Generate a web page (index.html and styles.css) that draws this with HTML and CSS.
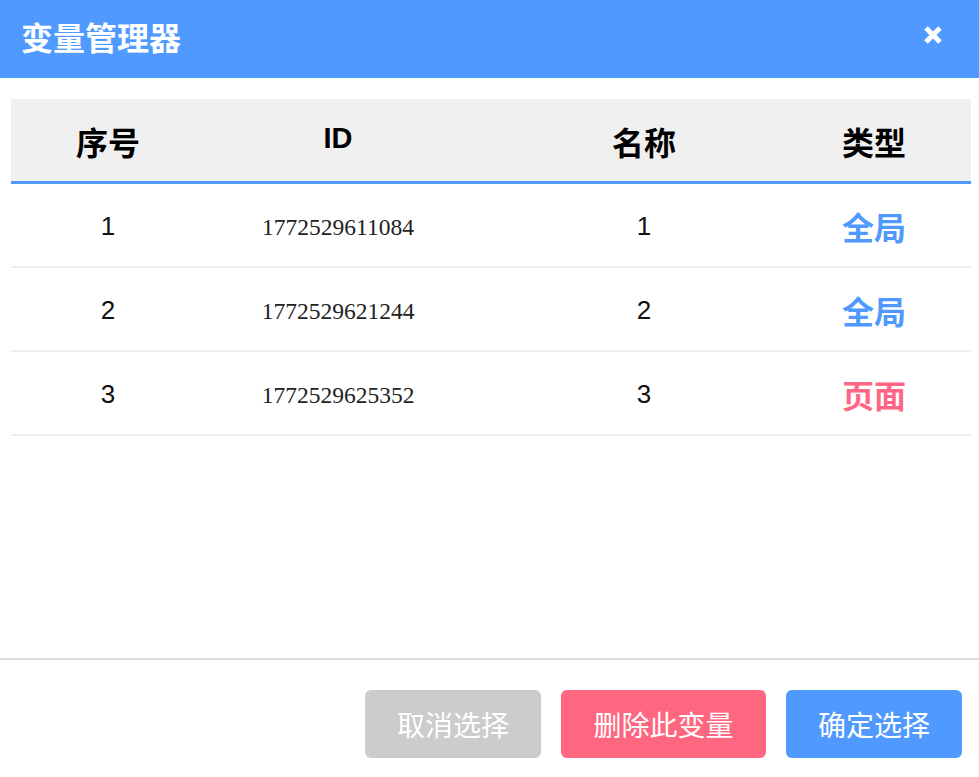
FILE: index.html
```html
<!DOCTYPE html>
<html lang="zh-CN">
<head>
    <meta charset="UTF-8">
    <meta name="viewport" content="width=device-width, initial-scale=1.0">
    <title>变量管理器</title>
    <link rel="stylesheet" href="styles.css">
</head>
<body>

    <div class="dialog">
        <div class="dialog-header">
            <h1 class="dialog-title">变量管理器</h1>
            <span class="close">
                <svg width="20" height="20" viewBox="0 0 20 20">
                    <path d="M3 3 L17 17 M17 3 L3 17" stroke="#fff" stroke-width="5" fill="none"/>
                </svg>
            </span>
        </div>

        <div class="dialog-body">
            <div class="table">
                <div class="row head">
                    <div class="cell">序号</div>
                    <div class="cell latin">ID</div>
                    <div class="cell">名称</div>
                    <div class="cell">类型</div>
                </div>
                <div class="row">
                    <div class="cell num">1</div>
                    <div class="cell id">1772529611084</div>
                    <div class="cell num">1</div>
                    <div class="cell type global">全局</div>
                </div>
                <div class="row">
                    <div class="cell num">2</div>
                    <div class="cell id">1772529621244</div>
                    <div class="cell num">2</div>
                    <div class="cell type global">全局</div>
                </div>
                <div class="row">
                    <div class="cell num">3</div>
                    <div class="cell id">1772529625352</div>
                    <div class="cell num">3</div>
                    <div class="cell type page">页面</div>
                </div>
            </div>
        </div>

        <div class="dialog-footer">
            <button class="btn btn-cancel">取消选择</button>
            <button class="btn btn-delete">删除此变量</button>
            <button class="btn btn-ok">确定选择</button>
        </div>
    </div>

</body>
</html>
```

FILE: styles.css
```css
body {
    margin: 0;
    font-family: "Liberation Sans", "Noto Sans CJK SC", sans-serif;
    background-color: #fff;
}
.dialog {
    display: flex;
    flex-direction: column;
    height: 100vh;
}
.dialog-header {
    height: 78px;
    background-color: #4f99ff;
    display: flex;
    align-items: center;
    justify-content: space-between;
    padding: 0 36px 0 21px;
    flex-shrink: 0;
}
.dialog-title {
    margin: -6px 0 0 0;
    color: #fff;
    font-size: 32px;
    font-weight: bold;
}
.close {
    display: flex;
    margin-top: -8px;
}
.dialog-body {
    flex: 1;
    padding: 21px 8px 0 11px;
}
.row {
    display: grid;
    grid-template-columns: 194px 266px 346px 114px;
    height: 82px;
    border-bottom: 2px solid #eeeeee;
}
.row.head {
    background-color: #f0f0f0;
    border-bottom: 3px solid #4f99ff;
    font-size: 32px;
    font-weight: bold;
    color: #000;
    padding-top: 2px;
    box-sizing: border-box;
    height: 85px;
}
.row.head .latin {
    font-size: 29px;
    margin-top: -6px;
}
.cell {
    display: flex;
    align-items: center;
    justify-content: center;
}
.num {
    font-size: 26px;
    color: #111;
    padding-top: 2px;
}
.id {
    font-family: "Liberation Serif", "Noto Serif CJK SC", serif;
    font-size: 23.5px;
    color: #222;
    padding-top: 4px;
}
.type {
    font-size: 32px;
    font-weight: bold;
    padding-top: 2px;
}
.global { color: #4f99ff; }
.page { color: #ff6584; }
.dialog-footer {
    border-top: 2px solid #dddddd;
    display: flex;
    justify-content: flex-end;
    gap: 20px;
    padding: 30px 17px 19px 0;
    flex-shrink: 0;
}
.btn {
    height: 68px;
    border: none;
    border-radius: 6px;
    color: #fff;
    font-family: "Liberation Sans", "Noto Sans CJK SC", sans-serif;
    font-size: 28px;
    cursor: pointer;
    padding: 0;
}
.btn-cancel { width: 176px; background-color: #cccccc; }
.btn-delete { width: 205px; background-color: #ff6680; }
.btn-ok { width: 176px; background-color: #4f99ff; }
```
